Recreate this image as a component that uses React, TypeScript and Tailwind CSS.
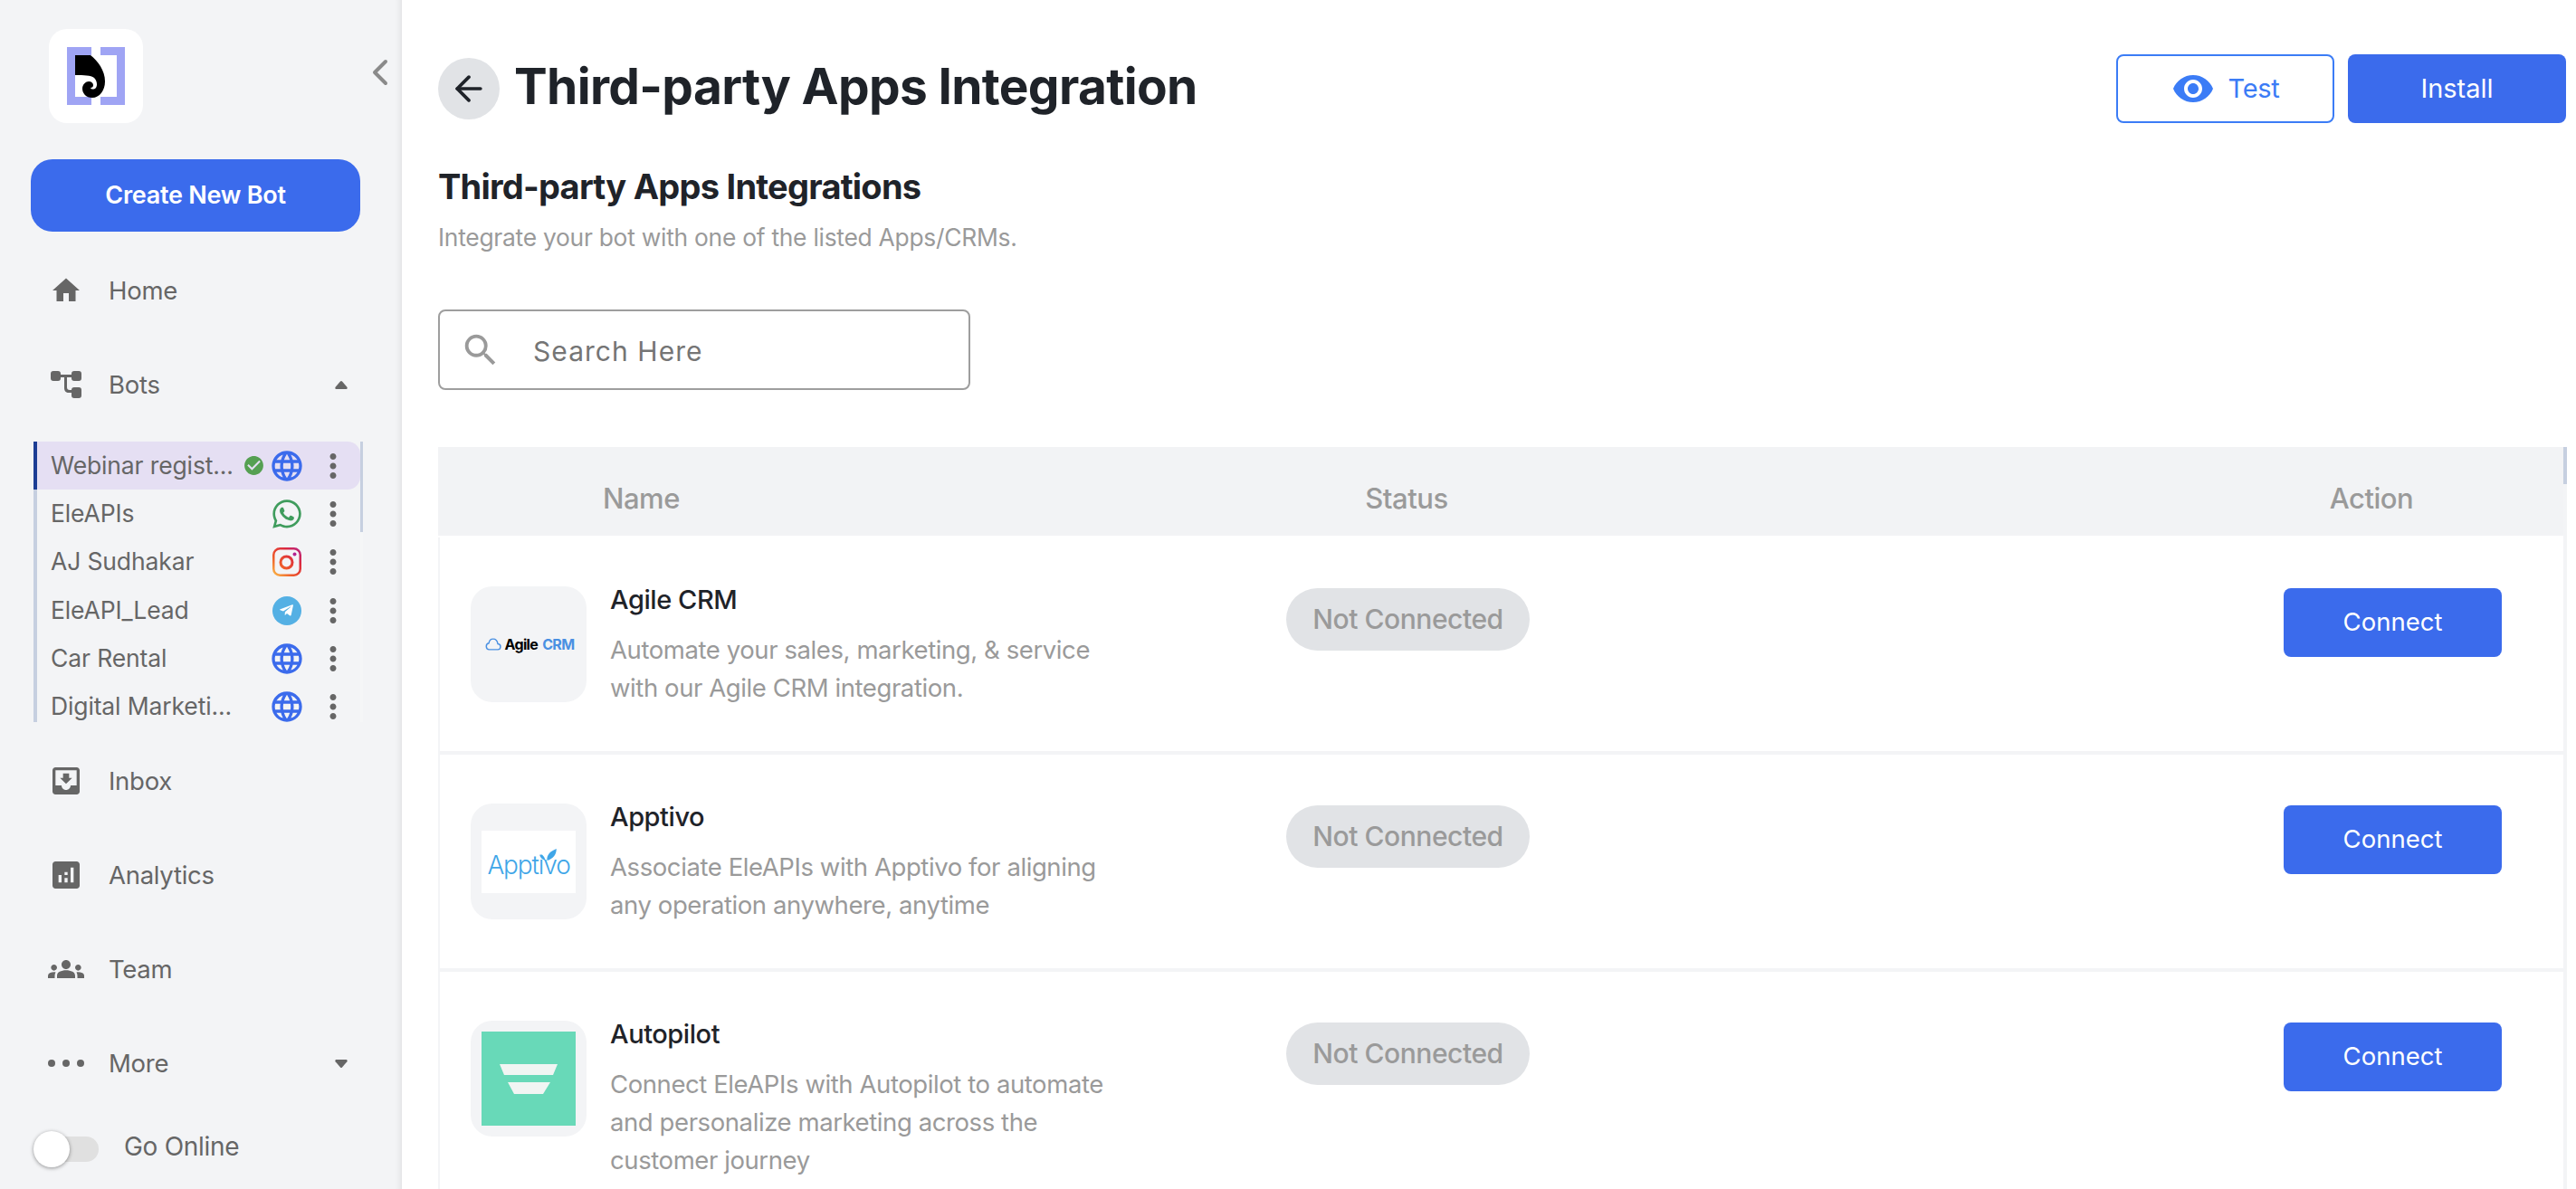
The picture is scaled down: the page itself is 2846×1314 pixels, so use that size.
import { ArrowLeft, ChevronLeft } from "lucide-react";
import type { ReactNode } from "react";
import { FaTelegramPlane, FaWhatsapp } from "react-icons/fa";
import {
  MdAnalytics,
  MdCheckCircle,
  MdGroups,
  MdHome,
  MdLanguage,
  MdMoreVert,
  MdMoveToInbox,
  MdRemoveRedEye,
  MdSearch,
} from "react-icons/md";

function Logo() {
  return (
    <svg viewBox="0 0 64 64" className="h-16 w-16">
      <path d="M0 0h27v9H9v46h18v9H0z" fill="#9fa4f4" />
      <path d="M37 0h27v64H37v-9h18V9H37z" fill="#9fa4f4" />
      <path
        d="M9 9h17c8 6 16 17 16 29 0 10-6 18-14 18-7 0-11-5-11-10 0-5 4-8 7-8 3 0 5 2 5 4s-1 3-3 3c1 2 4 2 6 0 2-3 1-8-2-11-4-3-11-3-21-3z"
        fill="#000"
      />
    </svg>
  );
}

function BotsIcon() {
  return (
    <svg viewBox="0 0 34 30" className="h-[30px] w-[34px]" fill="#666">
      <rect x="0" y="0" width="11" height="11" rx="3" />
      <rect x="23" y="0" width="11" height="11" rx="3" />
      <rect x="23" y="18" width="11" height="12" rx="3" />
      <path d="M10 4h14v3h-6v11c0 2 1 3 3 3h3v3h-4c-3 0-5-2-5-5V7h-5z" />
    </svg>
  );
}

function Caret({ down }: { down?: boolean }) {
  return (
    <svg viewBox="0 0 14 9" className={down ? "h-[9px] w-[14px] rotate-180" : "h-[9px] w-[14px]"} fill="#666">
      <path d="M6 .6a1.4 1.4 0 0 1 2 0l5.4 6.2c.6.8.2 2.2-1 2.2H1.6C.4 9 0 7.6.6 6.8z" />
    </svg>
  );
}

function MoreDots() {
  return (
    <svg viewBox="0 0 40 8" className="h-2 w-10" fill="#666">
      <circle cx="4" cy="4" r="4" />
      <circle cx="20" cy="4" r="4" />
      <circle cx="36" cy="4" r="4" />
    </svg>
  );
}

function InstagramIcon() {
  return (
    <svg viewBox="0 0 32 32" className="h-8 w-8" fill="none">
      <defs>
        <linearGradient id="ig" x1="0" y1="32" x2="32" y2="0" gradientUnits="userSpaceOnUse">
          <stop offset="0" stopColor="#fcc24a" />
          <stop offset="0.35" stopColor="#ee5a2b" />
          <stop offset="0.7" stopColor="#dc2a3e" />
          <stop offset="1" stopColor="#b4238f" />
        </linearGradient>
      </defs>
      <rect x="1.25" y="1.25" width="29.500" height="29.500" rx="7" stroke="url(#ig)" strokeWidth="2.5" />
      <circle cx="15.5" cy="16.5" r="6.5" stroke="url(#ig)" strokeWidth="3" />
      <circle cx="24.5" cy="7.5" r="2" fill="#b4238f" />
    </svg>
  );
}

function GlobeIcon() {
  return <MdLanguage className="h-10 w-10 shrink-0 text-[#3b6bec]" />;
}

function TelegramIcon() {
  return (
    <span className="flex h-8 w-8 items-center justify-center rounded-full bg-[#54b0e4]">
      <FaTelegramPlane className="h-[17px] w-[17px] -translate-x-px text-white" />
    </span>
  );
}

function NavItem({ icon, label, trailing }: { icon: ReactNode; label: string; trailing?: ReactNode }) {
  return (
    <div className="flex h-[104px] items-center pl-[53px] pr-[60px] text-[#666]">
      <span className="flex w-10 items-center justify-center">{icon}</span>
      <span className="ml-[27px] flex-1 pt-[2px] text-[27.5px] tracking-[-0.01em]">{label}</span>
      {trailing}
    </div>
  );
}

const bots = [
  { name: "Webinar regist...", icon: <GlobeIcon />, active: true },
  { name: "EleAPIs", icon: <FaWhatsapp className="h-9 w-9 shrink-0 text-[#3f9c5d]" /> },
  { name: "AJ Sudhakar", icon: <InstagramIcon /> },
  { name: "EleAPI_Lead", icon: <TelegramIcon /> },
  { name: "Car Rental", icon: <GlobeIcon /> },
  { name: "Digital Marketi...", icon: <GlobeIcon /> },
];

function BotList() {
  return (
    <div className="ml-[37px] mt-[11px] flex h-[310px] w-[364px] overflow-hidden">
      <div className="flex-1 border-l-4 border-[#c6cfe0]">
        {bots.map((bot) => (
          <div
            key={bot.name}
            className={
              bot.active
                ? "-ml-1 flex h-[53.3px] items-center rounded-r-[14px] border-l-4 border-[#1c3d94] bg-[#e5dff3] pl-[15px] text-[#666]"
                : "flex h-[53.3px] items-center pl-[15px] text-[#666]"
            }
          >
            <span className="flex-1 whitespace-nowrap text-[26.5px] tracking-[-0.005em]">{bot.name}</span>
            {bot.active ? <MdCheckCircle className="mr-[8px] h-[25px] w-[25px] text-[#55a052]" /> : null}
            <span className="flex w-8 items-center justify-center">{bot.icon}</span>
            <MdMoreVert className="ml-[14px] mr-[9px] h-[42px] w-[42px] text-[#666]" />
          </div>
        ))}
      </div>
      <div className="w-[3px] bg-[#f5f6f7]">
        <div className="h-[100px] bg-[#c6cfe0]" />
      </div>
    </div>
  );
}

function Sidebar() {
  return (
    <aside className="h-[1314px] w-[444px] shrink-0 bg-[#f3f4f6] shadow-[inset_-9px_0_9px_-9px_rgba(0,0,0,0.12)]">
      <div className="flex items-center justify-between pl-[54px] pt-8">
        <div className="flex h-[104px] w-[104px] items-center justify-center rounded-[20px] bg-white">
          <Logo />
        </div>
        <ChevronLeft className="-mt-[8px] h-12 w-12 text-[#8a8a8a]" strokeWidth={2} />
      </div>
      <button
        type="button"
        className="ml-[34px] mt-10 h-20 w-[364px] rounded-3xl bg-[#3b6bec] text-[27px] font-semibold tracking-[-0.01em] text-white"
      >
        Create New Bot
      </button>
      <nav className="mt-[13px]">
        <NavItem icon={<MdHome className="h-9 w-9" />} label="Home" />
        <NavItem icon={<BotsIcon />} label="Bots" trailing={<Caret />} />
        <BotList />
        <div className="mt-[13px]">
          <NavItem icon={<MdMoveToInbox className="h-10 w-10" />} label="Inbox" />
          <NavItem icon={<MdAnalytics className="h-10 w-10" />} label="Analytics" />
          <NavItem icon={<MdGroups className="h-10 w-10" />} label="Team" />
          <NavItem icon={<MoreDots />} label="More" trailing={<Caret down />} />
        </div>
      </nav>
      <div className="ml-[37px] mt-[19px] flex items-center">
        <div className="relative h-10 w-[72px]">
          <div className="absolute right-0 top-[6px] h-[28px] w-[60px] rounded-full bg-[#e0e0e0]" />
          <div className="absolute left-0 top-0 h-10 w-10 rounded-full bg-white shadow-[0_1px_4px_rgba(0,0,0,0.4)]" />
        </div>
        <span className="mb-[5px] ml-[28px] text-[28px] tracking-[-0.01em] text-[#666]">Go Online</span>
      </div>
    </aside>
  );
}

const apps = [
  {
    name: "Agile CRM",
    lines: ["Automate your sales, marketing, & service", "with our Agile CRM integration."],
    logo: (
      <div className="ml-[3px] flex items-center gap-[3px] text-[16px] font-bold tracking-[-0.04em]">
        <svg viewBox="0 0 20 16" className="h-[16px] w-[18px]" fill="none" stroke="#4a90e2" strokeWidth="1.6">
          <path d="M5 14.5h10a3.5 3.5 0 0 0 .6-7C15 4 12.6 1.5 9.8 1.5 7 1.500 5 3.600 4.600 6.600A4 4 0 0 0 5 14.500z" />
        </svg>
        <span className="text-black">Agile</span>
        <span className="ml-[2px] text-[#4a90e2]">CRM</span>
      </div>
    ),
  },
  {
    name: "Apptivo",
    lines: ["Associate EleAPIs with Apptivo for aligning", "any operation anywhere, anytime"],
    logo: (
      <div className="relative flex h-[69px] w-[104px] items-center justify-center bg-white pt-2">
        <span className="text-[28px] font-light tracking-[-0.04em] text-[#3fa6e8]">Apptivo</span>
        <svg viewBox="0 0 20 14" className="absolute left-[64px] top-[20px] h-[13px] w-[19px]" fill="#3fa6e8">
          <path d="M7 14C3 13 1 11 0 7c4 0 6 3 7 7zM9 14C8 8 12 3 20 0c0 7-4 12-11 14z" />
        </svg>
      </div>
    ),
  },
  {
    name: "Autopilot",
    lines: ["Connect EleAPIs with Autopilot to automate", "and personalize marketing across the", "customer journey"],
    logo: (
      <div className="flex h-[104px] w-[104px] items-center justify-center bg-[#68d9b8]">
        <svg viewBox="0 0 64 33" className="h-[33px] w-16" fill="#f1f5f3">
          <path d="M0 0h64l-5 12H5z" />
          <path d="M9 20h47l-8 13H16z" />
        </svg>
      </div>
    ),
  },
];

function AppRow({ app }: { app: (typeof apps)[number] }) {
  return (
    <div className="grid h-[240px] grid-cols-[935px_1fr_309px] border-b-4 border-l-2 border-[#f3f4f6] pt-[54px] last:border-b-0">
      <div className="flex pl-[34px]">
        <div className="flex h-32 w-32 shrink-0 items-center justify-center rounded-3xl bg-[#f3f4f6]">{app.logo}</div>
        <div className="-mt-[6px] ml-[26px]">
          <div className="text-[29px] font-medium leading-[42px] tracking-[-0.015em] text-[#1f2329]">{app.name}</div>
          <div className="mt-[13px] text-[27.5px] leading-[42px] tracking-[-0.015em] text-[#9a9a9a]">
            {app.lines.map((line) => (
              <div key={line} className="whitespace-nowrap">
                {line}
              </div>
            ))}
          </div>
        </div>
      </div>
      <div className="pt-[2px]">
        <span className="flex h-[69px] w-[269px] items-center justify-center rounded-full bg-[#e1e3e6] text-[30px] font-medium tracking-[-0.015em] text-[#9a9a9a]">
          Not Connected
        </span>
      </div>
      <div className="pt-[2px]">
        <button type="button" className="h-[76px] w-[241px] rounded-lg bg-[#3b6bec] text-[27.5px] font-normal text-white">
          Connect
        </button>
      </div>
    </div>
  );
}

function AppsTable() {
  return (
    <div className="ml-10 mt-[63px] flex w-[2352px]">
      <div className="flex-1">
        <div className="mb-[2px] grid h-[98px] grid-cols-[935px_1fr_309px] items-center bg-[#f2f3f5] pt-4 text-[31px] font-medium tracking-[-0.015em] text-[#9a9a9a]">
          <span className="pl-[182px]">Name</span>
          <span className="w-[270px] text-center">Status</span>
          <span className="w-[194px] text-center">Action</span>
        </div>
        {apps.map((app) => (
          <AppRow key={app.name} app={app} />
        ))}
      </div>
      <div className="w-1 bg-[#f3f4f6]">
        <div className="h-[41px] bg-[#c6cfe0]" />
      </div>
    </div>
  );
}

export default function App() {
  return (
    <div className="flex h-[1314px] w-[2846px] overflow-hidden bg-white font-['Inter','Liberation_Sans',sans-serif]">
      <Sidebar />
      <main className="min-w-0 flex-1">
        <div className="flex h-[136px] items-start justify-between pl-10 pr-[11px] pt-[60px]">
          <div className="flex h-[76px] items-center">
            <button type="button" className="flex h-[68px] w-[68px] items-center justify-center rounded-full bg-[#e1e3e6] text-[#1f2329]" aria-label="Back">
              <ArrowLeft className="h-11 w-11" strokeWidth={2} />
            </button>
            <h1 className="-mt-[6px] ml-4 text-[55px] font-bold leading-[72px] tracking-[-0.012em] text-[#1f2329]">Third-party Apps Integration</h1>
          </div>
          <div className="flex gap-[15px]">
            <button type="button" className="flex h-[76px] w-[241px] items-center justify-center gap-[15px] rounded-lg border-2 border-[#3b7cf6] text-[29px] tracking-[-0.01em] text-[#3b7cf6]">
              <MdRemoveRedEye className="h-12 w-12" />
              Test
            </button>
            <button type="button" className="h-[76px] w-[241px] rounded-lg bg-[#3b6bec] text-[29px] font-normal text-white">
              Install
            </button>
          </div>
        </div>
        <h2 className="ml-10 mt-[42px] text-[38px] font-bold leading-[57px] tracking-[-0.02em] text-[#1f2329]">Third-party Apps Integrations</h2>
        <p className="ml-10 mt-[7px] text-[26.4px] leading-[40px] tracking-[-0.01em] text-[#9a9a9a]">Integrate your bot with one of the listed Apps/CRMs.</p>
        <div className="ml-10 mt-[60px] flex h-[89px] w-[588px] items-center rounded-lg border-2 border-[#9e9e9e] pl-[22px]">
          <MdSearch className="h-[46px] w-[46px] text-[#9a9a9a]" />
          <span className="ml-[35px] mt-1 text-[30px] tracking-[0.035em] text-[#757575]">Search Here</span>
        </div>
        <AppsTable />
      </main>
    </div>
  );
}
